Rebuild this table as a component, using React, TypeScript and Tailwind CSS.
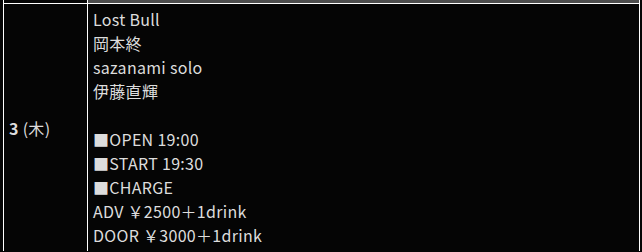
import React from "react";

const lines = [
  "Lost Bull",
  "岡本終",
  "sazanami solo",
  "伊藤直輝",
  "",
  "■OPEN 19:00",
  "■START 19:30",
  "■CHARGE",
  "ADV ￥2500＋1drink",
  "DOOR ￥3000＋1drink",
];

export default function App() {
  return (
    <div
      className="w-[642px] h-[252px] overflow-hidden bg-[#050505] pl-[3px] text-[#dddddd] text-[16px] leading-[24px] tracking-[0.3px]"
      style={{ fontFamily: '"Noto Sans CJK JP", "Noto Sans", sans-serif' }}
    >
      <div className="w-[637px] border-x border-white">
        <div className="flex h-[3px]">
          <div className="w-[84px] border-r border-white" />
          <div className="flex-1 bg-[#4d4d4d]" />
        </div>
        <div className="flex border-t border-white">
          <div className="w-[84px] shrink-0 border-r border-white flex items-center pl-[5px]">
            <span>
              <span className="font-bold">3</span> (木)
            </span>
          </div>
          <div className="flex-1 pl-[5px] pt-[3px] pb-[4px]">
            {lines.map((l, i) => (
              <div key={i} className="h-[24px] whitespace-pre">
                {l}
              </div>
            ))}
          </div>
        </div>
      </div>
    </div>
  );
}
